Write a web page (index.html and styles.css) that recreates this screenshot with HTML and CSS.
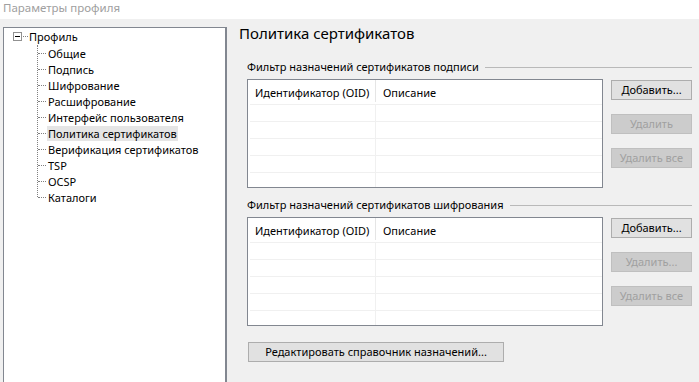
FILE: index.html
```html
<!DOCTYPE html>
<html lang="ru">
<head>
  <meta charset="UTF-8" />
  <title>Параметры профиля</title>
  <link rel="stylesheet" href="styles.css">
</head>
<body>

  <div class="titlebar">Параметры профиля</div>

  <div class="main">
    <div class="tree">
      <div class="root">
        <span class="toggle"></span>
        <span class="rootDash"></span>
        <span class="label">Профиль</span>
      </div>
      <ul class="children">
        <li><span class="label">Общие</span></li>
        <li><span class="label">Подпись</span></li>
        <li><span class="label">Шифрование</span></li>
        <li><span class="label">Расшифрование</span></li>
        <li><span class="label">Интерфейс пользователя</span></li>
        <li><span class="label selected">Политика сертификатов</span></li>
        <li><span class="label">Верификация сертификатов</span></li>
        <li><span class="label">TSP</span></li>
        <li><span class="label">OCSP</span></li>
        <li><span class="label">Каталоги</span></li>
      </ul>
    </div>

    <div class="content">
      <h1>Политика сертификатов</h1>

      <div class="group">
        <div class="groupTitle"><span>Фильтр назначений сертификатов подписи</span></div>
        <div class="groupBody">
          <div class="list">
            <div class="listHead">
              <div class="col oid">Идентификатор (OID)</div>
              <div class="col desc">Описание</div>
            </div>
            <div class="row"><div class="cell oid"></div><div class="cell"></div></div>
            <div class="row"><div class="cell oid"></div><div class="cell"></div></div>
            <div class="row"><div class="cell oid"></div><div class="cell"></div></div>
            <div class="row"><div class="cell oid"></div><div class="cell"></div></div>
            <div class="row"><div class="cell oid"></div><div class="cell"></div></div>
          </div>
          <div class="buttons">
            <button>Добавить...</button>
            <button disabled>Удалить</button>
            <button disabled>Удалить все</button>
          </div>
        </div>
      </div>

      <div class="group">
        <div class="groupTitle"><span>Фильтр назначений сертификатов шифрования</span></div>
        <div class="groupBody">
          <div class="list">
            <div class="listHead">
              <div class="col oid">Идентификатор (OID)</div>
              <div class="col desc">Описание</div>
            </div>
            <div class="row"><div class="cell oid"></div><div class="cell"></div></div>
            <div class="row"><div class="cell oid"></div><div class="cell"></div></div>
            <div class="row"><div class="cell oid"></div><div class="cell"></div></div>
            <div class="row"><div class="cell oid"></div><div class="cell"></div></div>
            <div class="row"><div class="cell oid"></div><div class="cell"></div></div>
          </div>
          <div class="buttons">
            <button>Добавить...</button>
            <button disabled>Удалить...</button>
            <button disabled>Удалить все</button>
          </div>
        </div>
      </div>

      <button class="editBtn">Редактировать справочник назначений...</button>
    </div>
  </div>

</body>
</html>
```

FILE: styles.css
```css
* {
  margin: 0;
  padding: 0;
  box-sizing: border-box;
}

body {
  font-family: "Noto Sans", sans-serif;
  font-size: 11px;
  color: #000;
  background: #f0f0f0;
  height: 382px;
  overflow: hidden;
}

.titlebar {
  height: 19px;
  background: #fff;
  color: #a0a0a0;
  padding-left: 3px;
  line-height: 15px;
  font-size: 11.5px;
}

.main {
  display: flex;
  align-items: flex-start;
}

/* tree on the left */
.tree {
  margin: 8px 0 0 3px;
  width: 224px;
  height: 355px;
  background: #fff;
  border: 1px solid #828790;
  border-right-width: 2px;
  border-bottom: none;
  padding: 0 0 0 9px;
}

.root {
  display: flex;
  align-items: center;
  height: 17px;
}

.toggle {
  position: relative;
  width: 9px;
  height: 9px;
  border: 1px solid #919191;
  background: #fff;
}

.toggle::after {
  content: "";
  position: absolute;
  left: 1px;
  top: 3px;
  width: 5px;
  height: 1px;
  background: #000;
}

.rootDash {
  width: 5px;
  margin-left: 1px;
  border-top: 1px dotted #808080;
}

.label {
  padding: 0 1px;
  line-height: 15px;
  white-space: nowrap;
}

.selected {
  background: #e5e5e5;
}

.children {
  list-style: none;
  margin-left: 24px;
  border-left: 1px dotted #808080;
  height: 152px;
}

.children li {
  display: flex;
  align-items: center;
  height: 16px;
}

.children li::before {
  content: "";
  width: 8px;
  border-top: 1px dotted #808080;
  margin-right: 1px;
}

/* right side */
.content {
  margin-left: 12px;
  width: 453px;
}

h1 {
  font-weight: normal;
  font-size: 15px;
  line-height: 20px;
  margin-top: 4px;
  height: 37px;
}

.group {
  margin-left: 8px;
}

.groupTitle {
  display: flex;
  align-items: center;
  height: 14px;
  line-height: 14px;
}

.groupTitle span {
  white-space: nowrap;
}

.groupTitle::after {
  content: "";
  flex: 1;
  border-top: 1px solid #b9b9b9;
  margin-left: 6px;
}

.groupBody {
  display: flex;
  align-items: flex-start;
  margin-top: 5px;
  margin-bottom: 10px;
}

.list {
  width: 356px;
  height: 109px;
  background: #fff;
  border: 1px solid #828790;
  overflow: hidden;
}

.listHead {
  display: flex;
  height: 24px;
}

.col {
  padding: 4px 0 0 7px;
  line-height: 17px;
  white-space: nowrap;
}

.oid {
  width: 128px;
  border-right: 1px solid #e5e5e5;
  flex-shrink: 0;
}

.col.oid {
  margin-bottom: 2px;
}

.row {
  display: flex;
  height: 17px;
  border-top: 1px solid #f0f0f0;
  margin-left: 2px;
}

.row .oid {
  width: 126px;
  border-right-color: #f0f0f0;
}

.cell {
  flex: 1;
}

.cell.oid {
  flex: none;
}

.buttons {
  display: flex;
  flex-direction: column;
  gap: 14px;
  margin-left: 8px;
  margin-top: 1px;
}

button {
  width: 81px;
  height: 20px;
  font-family: "Noto Sans", sans-serif;
  font-size: 11px;
  color: #000;
  background: #e1e1e1;
  border: 1px solid #adadad;
  line-height: 16px;
}

button:disabled {
  color: #a0a0a0;
  background: #cccccc;
  border-color: #bfbfbf;
}

.editBtn {
  width: 256px;
  margin: 6px 0 0 9px;
}
```
